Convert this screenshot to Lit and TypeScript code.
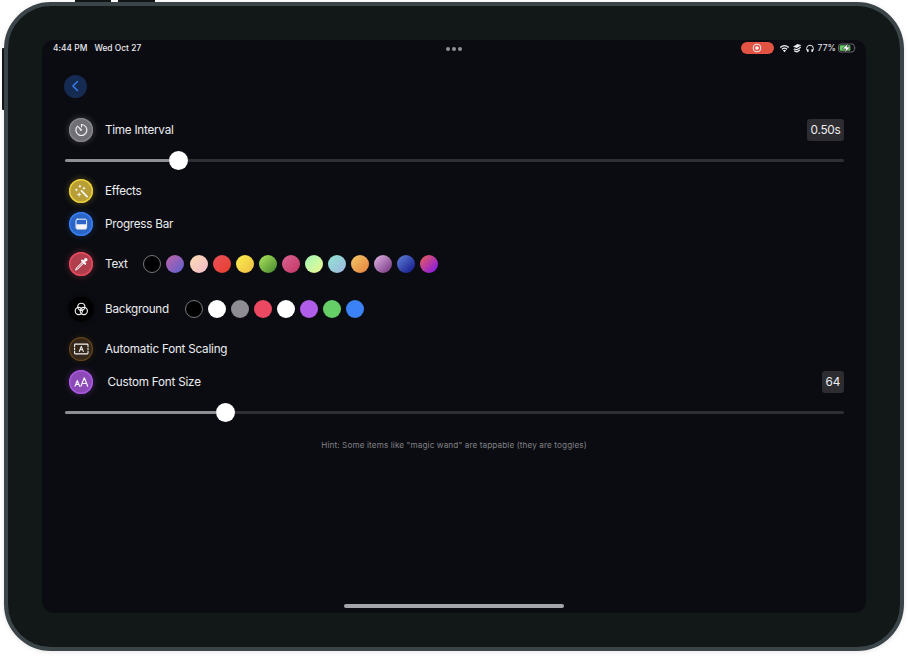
import { LitElement, html, css, svg } from "lit";
import { customElement, property } from "lit/decorators.js";

const icons: Record<string, unknown> = {
  timer: svg`<g stroke-width="1.15"><path d="M12.2 6.5A5.5 5.5 0 1 1 8.2 8.1"/><path d="M12.2 6.5v2.3"/></g><path d="M9.2 8.9l3.4 2.9-.8.8z" fill="currentColor" stroke-width=".8"/>`,
  wand: svg`<path d="M12.2 11.8l5.6 5.8" stroke-width="1.8"/><path d="M10.6 6.4v1.6M9.8 7.2h1.6M7.1 10v1.6M6.3 10.8h1.6M14.7 8.4v1.6M13.9 9.2h1.6M9.8 14.1v2.8M8.4 15.5h2.8" stroke-width="1.1"/>`,
  progress: svg`<rect x="6.7" y="7.2" width="10.6" height="9.8" rx="1.4" stroke-width="1"/><path d="M7 12.3h10v3.7q0 1-1 1H8q-1 0-1-1z" fill="currentColor" stroke="none"/>`,
  dropper: svg`<path d="M6.4 17.8l.9-2 6.1-6.1 1.2 1.2-6.1 6.1z" stroke-width="1" fill="#ffffff66"/><path d="M12.7 8.6l3.2 3.2M14 10.3l2.7-2.7" stroke-width="2.1"/><circle cx="16.5" cy="7.8" r="1.7" fill="currentColor" stroke="none"/>`,
  filters: svg`<g stroke-width="1.1"><circle cx="12" cy="9.8" r="3.6"/><circle cx="9.5" cy="14" r="3.6"/><circle cx="14.5" cy="14" r="3.6"/></g>`,
  scaling: svg`<path d="M5.3 9.8V7.9q0-.8.8-.8h11.8q.8 0 .8.8v1.9M5.3 14.2v1.9q0 .8.8.8h11.8q.8 0 .8-.8v-1.9M5.3 11.4v1.2M18.7 11.4v1.2" stroke-width="1.1"/><path d="M10 14.4l2-5 2 5M10.7 12.8h2.6" stroke-width="1.05"/>`,
  fontsize: svg`<path d="M5.7 16.3l2.3-5.8 2.3 5.8M6.5 14.4h3" stroke-width="1.1"/><path d="M11.6 16.3L15 7.8l3.4 8.5M12.8 13.5h4.4" stroke-width="1.2"/>`,
};

@customElement("icon-badge")
class IconBadge extends LitElement {
  @property() name = "";
  static styles = css`
    :host { display: block; flex: none; width: 24px; height: 24px; }
    .badge { box-sizing: border-box; width: 24px; height: 24px; border-radius: 50%; color: #f4f4f6; }
    svg { display: block; width: 24px; height: 24px; fill: none; stroke: currentColor; stroke-width: 1.2; stroke-linecap: round; stroke-linejoin: round; }
    .timer { background: #706f75; box-shadow: inset 0 0 0 1.3px #89888d, 0 0 7px #92919666; }
    .wand { background: #b89e35; box-shadow: inset 0 0 0 1.4px #ecd13d, 0 0 7px #ecd13d55; }
    .progress { background: #2b65c8; box-shadow: inset 0 0 0 1.4px #3880f3, 0 0 7px #3880f344; }
    .dropper { background: #b13e4c; box-shadow: inset 0 0 0 1.4px #e94b5e, 0 0 7px #e94b5e66; }
    .filters { background: #000; box-shadow: 0 0 5px #000; }
    .scaling { background: #35281a; box-shadow: inset 0 0 0 1.2px #65451a, 0 0 7px #65451a44; }
    .fontsize { background: #8c49b8; box-shadow: inset 0 0 0 1.4px #ac58e2, 0 0 7px #ac58e255; }
  `;
  render() {
    return html`<div class="badge ${this.name}"><svg viewBox="-.3 0 24 24">${icons[this.name]}</svg></div>`;
  }
}

@customElement("value-slider")
class ValueSlider extends LitElement {
  @property({ type: Number }) value = 0;
  static styles = css`
    :host { display: flex; align-items: center; width: 778.5px; }
    .fill { flex: none; height: 3px; border-radius: 2px 0 0 2px; background: #8f8e92; }
    .knob { flex: none; width: 19px; height: 19px; border-radius: 50%; background: #fff; }
    .rest { flex: 1; height: 3px; border-radius: 0 2px 2px 0; background: #303034; }
  `;
  render() {
    return html`<div class="fill" style="width:${this.value}px"></div><div class="knob"></div><div class="rest"></div>`;
  }
}

const textColors = [
  "#000",
  "linear-gradient(135deg,#c264a8,#5a5fd0)",
  "linear-gradient(135deg,#fbdcb2,#f3b9cb)",
  "linear-gradient(135deg,#e9515b,#e93e2c)",
  "linear-gradient(135deg,#f9f04d,#efbd43)",
  "linear-gradient(135deg,#aee75c,#43842f)",
  "linear-gradient(135deg,#da6494,#c43562)",
  "linear-gradient(135deg,#9ff8b9,#f0f98d)",
  "linear-gradient(135deg,#8ee5cf,#a1b4e1)",
  "linear-gradient(135deg,#f2c868,#e6803b)",
  "linear-gradient(135deg,#e2b5e5,#71307c)",
  "linear-gradient(135deg,#6182d8,#101489)",
  "linear-gradient(135deg,#ee6156,#7c12f2)",
];
const backgroundColors = ["#000", "#fff", "#8e8d93", "#eb4962", "#fff", "#b05eea", "#65ce67", "#3b82f7"];

@customElement("app-root")
class AppRoot extends LitElement {
  static styles = css`
    :host { display: block; position: relative; box-sizing: border-box; width: 908px; height: 657px; padding: 2px 4px 0; overflow: hidden; background: #fff; font-family: Inter, "Liberation Sans", sans-serif; color: #ececf0; }
    .key { position: absolute; background: #111717; }
    .up { left: 75px; top: 0; width: 36px; height: 4px; }
    .down { left: 118px; top: 0; width: 37px; height: 4px; }
    .side { left: 2px; top: 48px; width: 4px; height: 62px; border-radius: 1px; }
    .device { position: relative; box-sizing: border-box; width: 900px; height: 649px; border: 4px solid #3b4549; border-radius: 47px; background: #121717; padding: 34px; box-shadow: 0 1px 5px #0000141a; }
    .screen { box-sizing: border-box; display: flex; flex-direction: column; width: 824px; height: 573px; border-radius: 12px; background: #0b0c11; }
    .status { display: flex; align-items: center; height: 16px; flex: none; padding: 0 9px 0 11px; font-size: 8.4px; font-weight: 500; letter-spacing: .02px; }
    .date { margin-left: 7px; }
    .side-group { flex: 1; display: flex; align-items: center; white-space: nowrap; }
    .right { justify-content: flex-end; }
    .dots { display: flex; gap: 2px; margin: 1px 2px 0 0; }
    .dots i { width: 4px; height: 4px; border-radius: 50%; background: #919196; }
    .record { display: flex; align-items: center; justify-content: center; width: 33px; height: 12.5px; border-radius: 7px; background: #e25343; margin-right: 5px; }
    .percent { margin: 0 2px; font-weight: 400; font-size: 8.6px; }
    svg { display: block; fill: none; stroke: currentColor; flex: none; }
    .nav { display: flex; align-items: center; height: 60px; flex: none; padding-left: 22px; }
    .back { display: grid; place-items: center; width: 23px; height: 23px; border-radius: 50%; background: #162b51; color: #3984f7; }
    .row { display: flex; align-items: center; flex: none; padding: 0 22px 0 27px; font-size: 11.7px; letter-spacing: -.25px; }
    .label { margin-left: 12px; white-space: nowrap; }
    .auto .label, .wide .label { letter-spacing: -.22px; }
    .wide .label { margin-left: 14.5px; }
    .value { margin-left: auto; box-sizing: border-box; height: 22px; line-height: 22px; padding: 0 3.5px; border-radius: 3px; background: #2c2c31; font-size: 11.8px; }
    .wide .value { padding: 0 4px; }
    .swatches { display: flex; gap: 5.07px; margin-left: 15.8px; }
    .swatch { width: 18px; height: 18px; border-radius: 50%; box-sizing: border-box; }
    .swatch:first-child { border: 1px solid #77777b; }
    value-slider { margin-left: 23px; flex: none; }
    .time { height: 28px; }
    .time + value-slider { height: 32px; }
    .effects { height: 29px; }
    .bar { height: 38px; }
    .text { height: 41px; }
    .background { height: 49px; }
    .auto { height: 32px; }
    .custom { height: 34px; }
    .custom + value-slider { height: 27px; }
    .hint { height: 38px; line-height: 38px; flex: none; text-align: center; font-size: 8.2px; letter-spacing: .1px; color: #808085; }
    .home { width: 220px; height: 4px; border-radius: 2px; background: #a6a6aa; margin: auto auto 5px; }
  `;

  swatches(colors: string[]) {
    return html`<div class="swatches">${colors.map((c) => html`<div class="swatch" style="background:${c}"></div>`)}</div>`;
  }

  render() {
    return html`
      <div class="key up"></div><div class="key down"></div><div class="key side"></div>
      <div class="device"><div class="screen">
        <div class="status">
          <div class="side-group"><span>4:44 PM</span><span class="date">Wed Oct 27</span></div>
          <div class="dots"><i></i><i></i><i></i></div>
          <div class="side-group right">
            <div class="record"><svg width="10" height="10" viewBox="0 0 10 10" stroke="#fff"><circle cx="5" cy="5" r="3.9"/><circle cx="5" cy="5" r="1.8" fill="#fff" stroke="none"/></svg></div>
            <svg width="11" height="9" viewBox="0 0 11 9"><path d="M1.2 3.5Q5.5-.3 9.8 3.5M2.9 5.3Q5.5 3 8.1 5.3" stroke-width="1.3"/><path d="M3.9 6.5Q5.5 5.2 7.1 6.5L5.5 8.2z" fill="currentColor" stroke="none"/></svg>
            <svg width="14" height="10" viewBox="0 0 14 10"><path d="M3 3.7L7.4 1l4 1.2-4.6 2.9zM4.4 5.4l2.5.6 3.9-2.4v1.5L7 7.3l-3.8-.9zM4 7.3l3 .7 2.9-1.7v1.4L7.2 9.4l-2.9-.6z" fill="currentColor" stroke="none"/></svg>
            <svg width="12" height="9" viewBox="0 0 12 9"><path d="M3.9 7.5Q2.6 6 2.6 4.6a3.4 3.4 0 0 1 6.8 0Q9.4 6 8.1 7.5"/><path d="M3.8 5.2v2.6M8.2 5.2v2.6" stroke-width="1.6"/></svg>
            <span class="percent">77%</span>
            <svg width="19" height="10" viewBox="0 0 19 10"><rect x=".5" y="1" width="15.8" height="8" rx="2.4" stroke="#737377" stroke-width=".9"/><path d="M17.7 3.8q1.2 1.2 0 2.4z" fill="#737377" stroke="none"/><rect x="1.7" y="2.2" width="10.7" height="5.6" rx="1.2" fill="#65ce67" stroke="none"/><path d="M10.3.2L4.3 5.9h3.4L6.3 9.9l6.3-5.8H9z" fill="#fff" stroke="#0b0c11" stroke-width=".5"/></svg>
          </div>
        </div>
        <div class="nav"><div class="back"><svg width="10" height="12" viewBox="0 0 10 12"><path d="M6.5 1.5L1.9 6l4.6 4.5" stroke-width="1.25" stroke-linecap="round" stroke-linejoin="round"/></svg></div></div>
        <div class="row time"><icon-badge name="timer"></icon-badge><span class="label">Time Interval</span><span class="value">0.50s</span></div>
        <value-slider .value=${104}></value-slider>
        <div class="row effects"><icon-badge name="wand"></icon-badge><span class="label">Effects</span></div>
        <div class="row bar"><icon-badge name="progress"></icon-badge><span class="label">Progress Bar</span></div>
        <div class="row text"><icon-badge name="dropper"></icon-badge><span class="label">Text</span>${this.swatches(textColors)}</div>
        <div class="row background"><icon-badge name="filters"></icon-badge><span class="label">Background</span>${this.swatches(backgroundColors)}</div>
        <div class="row auto"><icon-badge name="scaling"></icon-badge><span class="label">Automatic Font Scaling</span></div>
        <div class="row custom wide"><icon-badge name="fontsize"></icon-badge><span class="label">Custom Font Size</span><span class="value">64</span></div>
        <value-slider .value=${151.3}></value-slider>
        <div class="hint">Hint: Some items like "magic wand" are tappable (they are toggles)</div>
        <div class="home"></div>
      </div></div>`;
  }
}
